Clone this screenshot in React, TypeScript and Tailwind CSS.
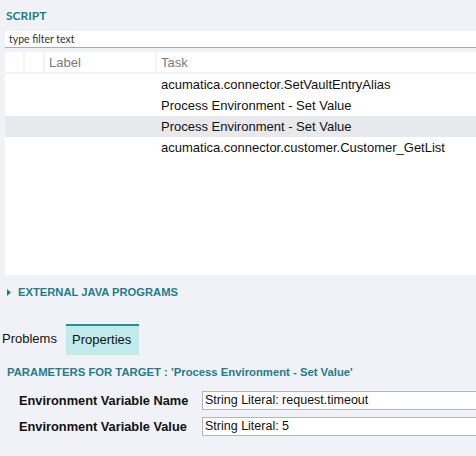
import React from "react";

const rows = [
  "acumatica.connector.SetVaultEntryAlias",
  "Process Environment - Set Value",
  "Process Environment - Set Value",
  "acumatica.connector.customer.Customer_GetList",
];

export default function App() {
  return (
    <div className="w-[476px] h-[456px] bg-[#f0f2f7] overflow-hidden" style={{ fontFamily: '"Liberation Sans", Arial, sans-serif' }}>
      <div className="h-[31px] pl-[6px] pt-[7px] text-[12px] font-bold text-[#1f7d8b]" style={{ fontFamily: 'Lato, sans-serif' }}>
        SCRIPT
      </div>
      <div className="ml-[5px] h-[17px] bg-white border-b border-[#a9abb0] pl-[4px] text-[10.5px] leading-[16px] text-[#333]" style={{ fontFamily: 'Lato, sans-serif' }}>
        type filter text
      </div>
      <div className="ml-[5px] mt-[4px] h-[223px] bg-white">
        <div className="flex h-[22px] border-b-2 border-[#f3f3f5] text-[13px] text-[#7a7a7a]">
          <div className="w-[20px] border-r-2 border-[#f3f3f5]" />
          <div className="w-[20px] border-r-2 border-[#f3f3f5]" />
          <div className="w-[112px] border-r-2 border-[#f3f3f5] pl-[4px] leading-[22px]">Label</div>
          <div className="flex-1 pl-[4px] leading-[22px]">Task</div>
        </div>
        {rows.map((r, i) => (
          <div key={i} className={`h-[21px] pl-[156px] text-[13px] leading-[21px] text-[#111] ${i === 2 ? "bg-[#e8e9ed]" : ""}`}>
            {r}
          </div>
        ))}
      </div>
      <div className="flex items-center h-[33px] pl-[7px] pt-[2px] text-[11.2px] font-bold text-[#1f7d8b]">
        <svg width="4" height="7" viewBox="0 0 4 7" className="mr-[7px]">
          <path d="M0 0 L4 3.5 L0 7 Z" fill="#1f7d8b" />
        </svg>
        EXTERNAL JAVA PROGRAMS
      </div>
      <div className="flex mt-[16px] h-[31px] text-[13px] text-[#111]">
        <div className="w-[66px] pl-[2px] pt-[5px]">Problems</div>
        <div className="w-[73px] bg-[#c1ebeb] border-t-[2px] border-[#1d9597] pl-[6px] pt-[4px]">Properties</div>
      </div>
      <div className="pl-[7px] pt-[9px] text-[11.3px] font-bold text-[#1f7d8b]">
        PARAMETERS FOR TARGET : 'Process Environment - Set Value'
      </div>
      <div className="mt-[10px] flex flex-col gap-[7px]">
        {[
          ["Environment Variable Name", "String Literal: request.timeout"],
          ["Environment Variable Value", "String Literal: 5"],
        ].map(([l, v]) => (
          <div key={l} className="flex items-center h-[19px]">
            <div className="w-[202px] pl-[19px] text-[12.8px] font-bold text-[#111]">{l}</div>
            <div className="flex-1 h-[19px] bg-white border border-[#b5b5b5] border-r-0 pl-[2px] text-[12.5px] leading-[17px] text-[#111]">{v}</div>
          </div>
        ))}
      </div>
    </div>
  );
}
